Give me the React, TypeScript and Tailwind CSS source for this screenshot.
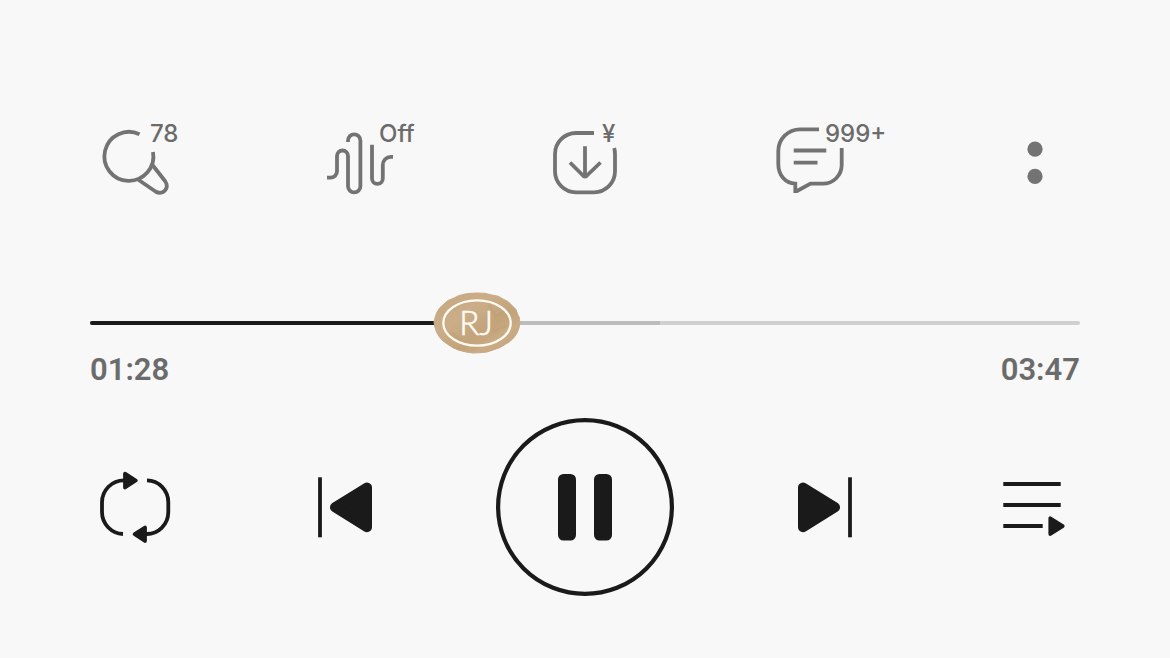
import { useState } from 'react';
import type { ReactNode } from 'react';

const DURATION = 227;

function ToolButton({ label, badge, badgeClass = '', children }: { label: string; badge?: string; badgeClass?: string; children: ReactNode }) {
  return (
    <button type="button" aria-label={label} className="relative h-[90px] w-[90px] shrink-0 text-[#737373]">
      <svg viewBox="0 0 90 90" className="h-full w-full" fill="none" stroke="currentColor" strokeWidth="3.8">
        {children}
      </svg>
      {badge && (
        <span className={`absolute top-[5px] whitespace-nowrap font-[Inter] text-[24px] leading-[24px] font-medium text-[#6b6b6b] ${badgeClass}`}>{badge}</span>
      )}
    </button>
  );
}

function ControlButton({ label, children }: { label: string; children: ReactNode }) {
  return (
    <button type="button" aria-label={label} className="h-[90px] w-[90px] shrink-0 text-[#1a1a1a]">
      <svg viewBox="0 0 90 90" className="h-full w-full" fill="none" stroke="currentColor" strokeWidth="3.8" strokeLinejoin="round">
        {children}
      </svg>
    </button>
  );
}

function Seal() {
  return (
    <svg viewBox="0 0 88 62" className="h-[62px] w-[88px]">
      <defs>
        <linearGradient id="paper" x1="0" y1="0" x2="1" y2="1">
          <stop offset="0" stopColor="#c4a67f" />
          <stop offset="0.35" stopColor="#cbae88" />
          <stop offset="0.6" stopColor="#c2a37a" />
          <stop offset="0.75" stopColor="#c9ab84" />
          <stop offset="1" stopColor="#c2a37b" />
        </linearGradient>
      </defs>
      <path
        fill="url(#paper)"
        stroke="url(#paper)"
        strokeWidth="1"
        strokeLinejoin="round"
        d="M44 1L52 1.3L59 3L65 4.2L70 7L75 9.5L79 13.5L83 17.5L84.5 22L86.5 26L86.7 31L86 36L84 41L81 45.5L77 49.5L72 52.5L67 55.5L60 58L54 60L47 60.7L40 61L33 60L26 58.2L20 55.8L15 52.5L10 49L6 44.5L3.5 40L1.8 35L1 30L2.2 25L4 20L7 15.5L11 12L15 8.5L21 6L26 3.5L32 2L38 1.3Z"
      />
      <path d="M56 13L63 24L70 20M60 40L73 34M20 18L30 10M17 40L28 48" stroke="#a98558" strokeOpacity="0.12" strokeWidth="3" fill="none" />
      <ellipse cx="44" cy="31" rx="33.7" ry="22.7" fill="none" stroke="#fffaf2" strokeWidth="2.3" />
      <text x="43" y="43" textAnchor="middle" fill="#fffaf2" stroke="#fffaf2" strokeWidth="0.7" className="font-['Lato',sans-serif] text-[33px] font-light">
        RJ
      </text>
    </svg>
  );
}

function formatTime(seconds: number) {
  const s = Math.floor(seconds);
  return `${String(Math.floor(s / 60)).padStart(2, '0')}:${String(s % 60).padStart(2, '0')}`;
}

export default function App() {
  const [position, setPosition] = useState(88.7);
  const played = (position / DURATION) * 100;

  return (
    <main className="min-h-screen bg-[#f8f8f8] px-[90px] pt-[117px] pb-[62px] font-['Inter',sans-serif]">
      {/* Song tools */}
      <div className="flex justify-between">
        <ToolButton label="Identify song" badge="78" badgeClass="left-[60px]">
          <path d="M49.5 17.3A24.5 24.5 0 1 0 63 35" />
          <path d="M62.5 48L75 64C80 71 73 79 65.5 74.5L48 62.5" />
        </ToolButton>
        <ToolButton label="Sound effects" badge="Off" badgeClass="left-16">
          <path d="M12 60.7H15.5A6.5 6.5 0 0 0 22 54.2V39A5.5 5.5 0 0 1 33 39V69.2A6.2 6.2 0 0 0 45.4 69.2V23.5A6.2 6.2 0 0 0 33 23.5V25" />
          <path d="M57 27.7V61.5A5.4 5.4 0 0 0 67.8 61.5V48A8 8 0 0 1 75.8 39.8H78" />
        </ToolButton>
        <ToolButton label="Download" badge="¥" badgeClass="left-[62px]">
          <path d="M54 16H36A21 21 0 0 0 15 37V54.3A21 21 0 0 0 36 75.3H54A21 21 0 0 0 75 54.3V37Q75 34 74.2 31" />
          <path d="M45 29.3V60M30 45.5L42.5 58Q45 61 47.5 58L60.5 45.5" />
        </ToolButton>
        <ToolButton label="Comments" badge="999+" badgeClass="left-[60px]">
          <path d="M54 12.3H35A21.7 21.7 0 0 0 13.3 34V47C13.3 58 20 66 30.3 66.7V74H32L45.5 66.7H58A18.7 18.7 0 0 0 76.7 48V31" />
          <path d="M28.7 33.5H61.3M28.7 45.6H52.5" />
        </ToolButton>
        <ToolButton label="More">
          <circle cx="45" cy="32.2" r="7.6" fill="currentColor" stroke="none" />
          <circle cx="45" cy="59.4" r="7.6" fill="currentColor" stroke="none" />
        </ToolButton>
      </div>

      {/* Progress */}
      <div className="relative mt-[85px] flex h-[62px] items-center">
        <div className="relative h-1 w-full overflow-hidden rounded-full bg-[#d0d0d0]">
          <div className="absolute inset-y-0 left-0 bg-[#bcbcbc]" style={{ width: '57.6%' }} />
          <div className="absolute inset-y-0 left-0 bg-[#1a1a1a]" style={{ width: `${played}%` }} />
        </div>
        <div className="pointer-events-none absolute top-0 -translate-x-1/2" style={{ left: `${played}%` }}>
          <Seal />
        </div>
        <input
          type="range"
          aria-label="Playback position"
          min={0}
          max={DURATION}
          step="any"
          value={position}
          onChange={(e) => setPosition(Number(e.target.value))}
          className="absolute inset-0 h-full w-full cursor-pointer opacity-0"
        />
      </div>
      <div className="flex justify-between font-['Roboto',sans-serif] text-[31px] leading-8 font-semibold text-[#6b6b6b]">
        <span>{formatTime(position)}</span>
        <span>{formatTime(DURATION)}</span>
      </div>

      {/* Transport */}
      <div className="mt-8 flex items-center justify-between">
        <ControlButton label="Repeat">
          <path d="M34 18.3A22 22 0 0 0 12 40.3V50A22 22 0 0 0 33 72" />
          <path d="M57 18.3A21.5 22 0 0 1 78.3 40.3V50A21.5 22 0 0 1 56 72" />
          <path d="M35 11.7V25.5L45.7 18.5ZM55 65.5V79L44.7 72.2Z" fill="currentColor" />
        </ControlButton>
        <ControlButton label="Previous">
          <path d="M27 15.3V75.3" />
          <path d="M42 45.3L74 25.5V65.2Z" fill="currentColor" strokeWidth="10" />
        </ControlButton>
        <button type="button" aria-label="Pause" className="h-[178px] w-[178px] shrink-0 text-[#1a1a1a]">
          <svg viewBox="0 0 178 178" className="h-full w-full" fill="currentColor">
            <circle cx="89" cy="89" r="86.9" fill="none" stroke="currentColor" strokeWidth="4.2" />
            <rect x="62" y="56" width="18" height="66.6" rx="5.5" />
            <rect x="98" y="56" width="18" height="66.6" rx="5.5" />
          </svg>
        </button>
        <ControlButton label="Next">
          <path d="M63 15.3V75.3" />
          <path d="M48 45.3L16 25.5V65.2Z" fill="currentColor" strokeWidth="10" />
        </ControlButton>
        <ControlButton label="Playlist">
          <path d="M13.3 22H70.7M13.3 43H70.7M13.3 64H52.7" />
          <path d="M60.3 56.3V72L72.7 64.1Z" fill="currentColor" />
        </ControlButton>
      </div>
    </main>
  );
}
